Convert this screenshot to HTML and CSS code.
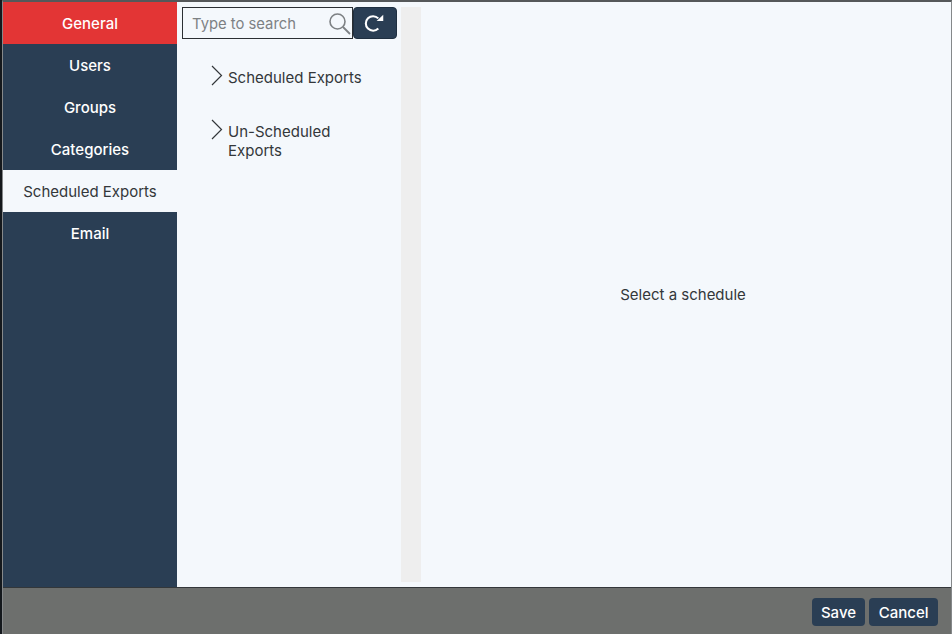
FILE: index.html
```html
<!DOCTYPE html>
<html>
<head>
    <title>Settings</title>
    <link rel="stylesheet" href="styles.css">
</head>
<body>
    <div class="dialog">
        <div class="dialog-main">
            <div class="sidebar">
                <div class="nav-item active-red">General</div>
                <div class="nav-item">Users</div>
                <div class="nav-item">Groups</div>
                <div class="nav-item">Categories</div>
                <div class="nav-item selected">Scheduled Exports</div>
                <div class="nav-item">Email</div>
            </div>
            <div class="tree-panel">
                <div class="search-row">
                    <div class="search-box">
                        <span class="search-text">Type to search</span>
                        <svg class="search-icon" width="22" height="22" viewBox="0 0 22 22" fill="none" stroke="#7d8184">
                            <circle cx="8.500" cy="8.500" r="7.500" stroke-width="1.600"/>
                            <path d="M14 14l7 7" stroke-width="1.800"/>
                        </svg>
                    </div>
                    <button class="refresh-btn">
                        <svg width="22" height="22" viewBox="0 0 20 20" fill="none">
                            <path d="M13 5.800A6.600 6.600 0 1 0 13 15" stroke="#fff" stroke-width="1.900"/>
                            <path d="M11.500 8.200L17.500 8.200L17.500 2.500z" fill="#fff"/>
                        </svg>
                    </button>
                </div>
                <div class="tree-item">
                    <svg class="chevron" width="12" height="21" viewBox="0 0 12 21" fill="none" stroke="#33373a" stroke-width="1.200"><path d="M1 1l9.500 9.500L1 20"/></svg>
                    <span>Scheduled Exports</span>
                </div>
                <div class="tree-item">
                    <svg class="chevron" width="12" height="21" viewBox="0 0 12 21" fill="none" stroke="#33373a" stroke-width="1.200"><path d="M1 1l9.500 9.500L1 20"/></svg>
                    <span>Un-Scheduled<br>Exports</span>
                </div>
            </div>
            <div class="scroll-track"></div>
            <div class="detail-pane">Select a schedule</div>
        </div>
        <div class="dialog-footer">
            <button class="footer-btn">Save</button>
            <button class="footer-btn">Cancel</button>
        </div>
    </div>
</body>
</html>
```
FILE: styles.css
```css
html, body { margin: 0; height: 100%; }
body { font-family: Inter, "Noto Sans", sans-serif; font-size: 15px; color: #33373a; background: #14181c; overflow: hidden; }
.dialog { box-sizing: border-box; height: 634px; margin-left: 2px; background: #33373a; border-top: 2px solid #55585a; border-left: 1px solid #85888a; border-right: 1px solid #85888a; display: flex; flex-direction: column; }
.dialog-main { display: flex; height: 585px; background: #f4f8fc; }
.sidebar { width: 174px; background: #2a3e54; flex-shrink: 0; }
.nav-item { height: 42px; line-height: 44px; text-align: center; color: #fff; font-weight: 450; }
.nav-item.active-red { background: #e33535; }
.nav-item.selected { background: #f4f8fc; color: #33373a; font-weight: 400; }
.tree-panel { width: 224px; flex-shrink: 0; box-sizing: border-box; padding: 5px 0 0 5px; }
.search-row { display: flex; height: 32px; }
.search-box { box-sizing: border-box; width: 171px; border: 1px solid #2b2f33; display: flex; align-items: center; justify-content: space-between; padding: 2px 1px 0 9px; font-size: 14.800px; }
.search-text { color: #7d8184; }
.search-icon { flex-shrink: 0; margin-top: -1px; }
.refresh-btn { width: 44px; height: 32px; padding: 0; border: 1px solid #1f2f40; border-radius: 4px; background: #2a3e54; display: flex; align-items: center; justify-content: center; }
.tree-item { display: flex; gap: 5px; padding-left: 29px; margin-top: 29px; line-height: 19.500px; }
.tree-item + .tree-item { margin-top: 34px; }
.chevron { flex-shrink: 0; margin-top: -3px; }
.scroll-track { width: 20px; height: 575px; margin-top: 5px; background: #eeeeee; flex-shrink: 0; }
.detail-pane { flex: 1; display: flex; align-items: center; justify-content: center; padding: 0 6px 1px 0; }
.dialog-footer { flex: 1; margin-top: 1px; background: #6d6f6d; display: flex; justify-content: flex-end; align-items: flex-start; gap: 4px; padding: 10px 13px 0 0; }
.footer-btn { height: 28px; padding: 0 9.400px; border: none; border-radius: 4px; background: #2a3e54; color: #fff; font-family: inherit; font-size: 15px; font-weight: 450; }
```
